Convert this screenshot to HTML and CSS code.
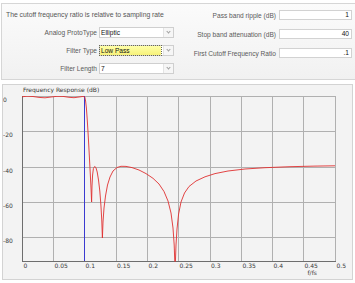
FILE: index.html
```html
<!DOCTYPE html>
<html>
<head>
<meta charset="utf-8">
<title>Filter Design</title>
<link rel="stylesheet" href="styles.css">
</head>
<body>
<div class="settings">
  <div class="col col-left">
    <p class="note">The cutoff frequency ratio is relative to sampling rate</p>
    <div class="field">
      <label>Analog ProtoType</label>
      <div class="combo"><span class="combo-text">Elliptic</span><span class="combo-btn"></span></div>
    </div>
    <div class="field">
      <label>Filter Type</label>
      <div class="combo combo-focus"><span class="combo-text">Low Pass</span><span class="combo-btn"></span></div>
    </div>
    <div class="field">
      <label>Filter Length</label>
      <div class="combo"><span class="combo-text">7</span><span class="combo-btn"></span></div>
    </div>
  </div>
  <div class="col col-right">
    <div class="field">
      <label>Pass band ripple (dB)</label>
      <div class="num">1</div>
    </div>
    <div class="field">
      <label>Stop band attenuation (dB)</label>
      <div class="num">40</div>
    </div>
    <div class="field">
      <label>First Cutoff Frequency Ratio</label>
      <div class="num">.1</div>
    </div>
  </div>
</div>

<div class="chart">
  <div class="chart-title">Frequency Response (dB)</div>
  <svg class="plot" width="349" height="184" viewBox="3 95 349 184">
    <defs>
      <clipPath id="plotArea"><rect x="22" y="96" width="314" height="165.5"/></clipPath>
    </defs>
    <!-- grid -->
    <g class="grid">
      <line x1="22" y1="96.5" x2="336" y2="96.5"/>
      <line x1="22" y1="131.5" x2="336" y2="131.5"/>
      <line x1="22" y1="167.5" x2="336" y2="167.5"/>
      <line x1="22" y1="202.5" x2="336" y2="202.5"/>
      <line x1="22" y1="237.5" x2="336" y2="237.5"/>
      <line x1="53.5" y1="96" x2="53.5" y2="261"/>
      <line x1="84.5" y1="96" x2="84.5" y2="261"/>
      <line x1="116.5" y1="96" x2="116.5" y2="261"/>
      <line x1="147.5" y1="96" x2="147.5" y2="261"/>
      <line x1="178.5" y1="96" x2="178.5" y2="261"/>
      <line x1="210.5" y1="96" x2="210.5" y2="261"/>
      <line x1="241.5" y1="96" x2="241.5" y2="261"/>
      <line x1="272.5" y1="96" x2="272.5" y2="261"/>
      <line x1="303.5" y1="96" x2="303.5" y2="261"/>
      <line x1="335.5" y1="96" x2="335.5" y2="261"/>
    </g>
    <g class="axis">
      <line x1="22.5" y1="96" x2="22.5" y2="262"/>
      <line x1="22" y1="261.5" x2="336" y2="261.5"/>
    </g>
    <!-- cutoff marker -->
    <line class="cutoff" x1="84.5" y1="96" x2="84.5" y2="261"/>
    <!-- magnitude response -->
    <polyline class="response" clip-path="url(#plotArea)" points="
      22,96.8 27,96.2 33,96.5 39,97.4 45,97.8 51,97 57,96.3 63,96.4 69,97.3 74,97.7 79,97 83,96.4 84.8,97
      85.6,101 86.4,108 87.2,119 88,132 88.8,146 89.6,161 90.4,176 91.1,190 91.6,202
      92,186 92.6,175 93.4,168.5 94.6,166.5 95.9,167.5 97.2,172 98.5,180 99.8,191 100.9,205 101.8,221 102.4,238
      103,222 104,208 105.5,196 107.5,185 110,177 113,171 117,167.5 121,166.3 126,166.4 132,167.6 139,170 146,173.6 153,178.3 159,184 164,191.5 168,201 171,213 173,228 174.2,245 174.8,262
      175.4,262 176,245 177,229 178.6,214 181,202 184.5,193 189,186.5 196,181 205,176.8 215,173.6 228,171 245,169 265,167.7 290,166.7 315,166.1 335,165.8"/>
    <!-- axis labels -->
    <g class="labels">
      <text x="3" y="101.5">0</text>
      <text x="3" y="136.5">-20</text>
      <text x="3" y="172.5">-40</text>
      <text x="3" y="207.5">-60</text>
      <text x="3" y="242.5">-80</text>
      <text x="23.5" y="268">0</text>
      <text x="54.5" y="268">0.05</text>
      <text x="85.5" y="268">0.1</text>
      <text x="117" y="268">0.15</text>
      <text x="148.5" y="268">0.2</text>
      <text x="179.5" y="268">0.25</text>
      <text x="211" y="268">0.3</text>
      <text x="242.5" y="268">0.35</text>
      <text x="273.5" y="268">0.4</text>
      <text x="304.5" y="268">0.45</text>
      <text x="336.5" y="268">0.5</text>
      <text x="307.5" y="275">f/fs</text>
    </g>
  </svg>
</div>
</body>
</html>
```

FILE: styles.css
```css
body {
  margin: 0;
  width: 355px;
  height: 283px;
  overflow: hidden;
  background-color: #ffffff;
  font-family: "Liberation Sans", Arial, sans-serif;
}

/* settings panel */

.settings {
  display: flex;
  height: 75px;
  margin: 3px 0 0 1px;
  border: 1px solid #d6d6d6;
  border-right: none;
  background: linear-gradient(#fbfbfb, #f1f1f1);
}

.col {
  display: flex;
  flex-direction: column;
  padding-top: 6px;
}

.col-left {
  width: 174px;
  padding-left: 1px;
}

.col-right {
  width: 178px;
}

.note {
  margin: 0 0 7px 3px;
  height: 10px;
  line-height: 10px;
  font-size: 6.8px;
  color: #555555;
  white-space: nowrap;
}

.field {
  display: flex;
  align-items: center;
}

.col-left .field {
  height: 11px;
  margin-bottom: 7px;
}

.col-right .field {
  height: 10px;
  margin-bottom: 9px;
}

.field label {
  font-size: 6.6px;
  color: #5a5a5a;
  text-align: right;
  white-space: nowrap;
}

.col-left .field label {
  width: 94px;
  margin-right: 2px;
}

.col-right .field label {
  width: 99px;
  margin-right: 3px;
}

/* drop-down boxes */

.combo {
  display: flex;
  width: 75px;
  height: 11px;
  box-sizing: border-box;
  border: 1px solid #cfcfcf;
  background-color: #ffffff;
}

.combo-text {
  flex: 1;
  padding-left: 1px;
  font-size: 6.6px;
  line-height: 9px;
  color: #111111;
}

.combo-btn {
  position: relative;
  width: 9px;
  border-left: 1px solid #e4e4e4;
  background-color: #f6f6f6;
}

.combo-btn::after {
  content: "";
  position: absolute;
  left: 3px;
  top: 2px;
  width: 2px;
  height: 2px;
  border-right: 1px solid #a0a0a0;
  border-bottom: 1px solid #a0a0a0;
  transform: rotate(45deg);
}

.combo-focus .combo-text {
  margin-right: 2px;
  background: linear-gradient(#ffffa8, #f7f27a);
  outline: 1px dotted #6a6a50;
}

/* numeric boxes */

.num {
  width: 73px;
  height: 10px;
  box-sizing: border-box;
  padding-right: 2px;
  border: 1px solid #d2d2d2;
  background-color: #ffffff;
  font-size: 6.6px;
  line-height: 8px;
  color: #111111;
  text-align: right;
}

/* frequency response chart */

.chart {
  width: 351px;
  height: 196px;
  box-sizing: border-box;
  margin: 4px 0 0 2px;
  border: 1px solid #d3d3d3;
  background-color: #f3f3f3;
}

.chart-title {
  height: 10px;
  padding-left: 20px;
  font-family: "DejaVu Sans", sans-serif;
  font-size: 6px;
  line-height: 10px;
  color: #333333;
}

.plot {
  display: block;
}

.grid line {
  stroke: #b0b0b0;
  stroke-width: 1;
}

.axis line {
  stroke: #6e6e6e;
  stroke-width: 1;
}

.cutoff {
  stroke: #3a3ad0;
  stroke-width: 1;
}

.response {
  fill: none;
  stroke: #e03030;
  stroke-width: 0.9;
  stroke-linejoin: round;
}

.labels text {
  font-family: "DejaVu Sans", sans-serif;
  font-size: 6px;
  fill: #3a3a3a;
}
```
